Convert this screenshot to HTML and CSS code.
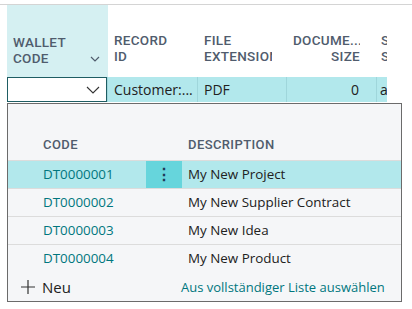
FILE: index.html
```html
<!DOCTYPE html>
<html lang="de">
<head>
  <meta charset="UTF-8" />
  <meta name="viewport" content="width=device-width, initial-scale=1.0" />
  <title>Wallet Code Lookup</title>
  <link rel="stylesheet" href="styles.css">
</head>
<body>
  <div class="grid">
    <div class="head">
      <div class="gutter"></div>
      <div class="hcell col-wallet active">
        <span class="htext">Wallet<br>Code</span>
        <svg class="chev" width="10" height="6" viewBox="0 0 10 6"><path d="M1 1l4 4 4-4" fill="none" stroke="#505c6d" stroke-width="1.2"/></svg>
      </div>
      <div class="hcell col-record"><span class="htext">Record<br>ID</span></div>
      <div class="hcell col-ext"><span class="htext">File<br>Extension</span></div>
      <div class="hcell col-size right"><span class="htext">Docume...<br>Size</span></div>
      <div class="hcell col-last"><span class="htext">Se<br>St</span></div>
    </div>
    <div class="row">
      <div class="gutter"></div>
      <div class="cell col-wallet">
        <div class="input">
          <svg class="chev" width="14" height="8" viewBox="0 0 14 8"><path d="M1 1l6 6 6-6" fill="none" stroke="#333" stroke-width="1.1"/></svg>
        </div>
      </div>
      <div class="cell col-record">Customer:...</div>
      <div class="cell col-ext">PDF</div>
      <div class="cell col-size right">0</div>
      <div class="cell col-last">a</div>
    </div>
  </div>

  <div class="lookup">
    <div class="lhead">
      <div class="lcode">Code</div>
      <div class="lbtn"></div>
      <div class="ldesc">Description</div>
    </div>
    <div class="lrow current">
      <div class="lcode">DT0000001</div>
      <div class="lbtn"><span class="dots">&#8942;</span></div>
      <div class="ldesc">My New Project</div>
    </div>
    <div class="lrow">
      <div class="lcode">DT0000002</div>
      <div class="lbtn"></div>
      <div class="ldesc">My New Supplier Contract</div>
    </div>
    <div class="lrow">
      <div class="lcode">DT0000003</div>
      <div class="lbtn"></div>
      <div class="ldesc">My New Idea</div>
    </div>
    <div class="lrow">
      <div class="lcode">DT0000004</div>
      <div class="lbtn"></div>
      <div class="ldesc">My New Product</div>
    </div>
    <div class="lfoot">
      <a class="new" href="#">
        <svg width="16" height="16" viewBox="0 0 16 16"><path d="M8 1v14M1 8h14" stroke="#333" stroke-width="1.2"/></svg>
        Neu
      </a>
      <a class="full" href="#">Aus vollständiger Liste auswählen</a>
    </div>
  </div>
</body>
</html>
```

FILE: styles.css
```css
body {
  margin: 0;
  font-family: "Open Sans", "Noto Sans", sans-serif;
  background: #fff;
  color: #212121;
  overflow: hidden;
}
.grid {
  margin-top: 4px;
  border-top: 1px solid #d4d4d4;
}
.head, .row {
  display: flex;
}
.gutter {
  width: 7px;
  flex: none;
}
.col-wallet { width: 101px; flex: none; }
.col-record { width: 90px; flex: none; }
.col-ext { width: 89px; flex: none; }
.col-size { width: 90px; flex: none; }
.col-last { width: 10px; flex: none; }

.hcell {
  height: 72px;
  box-sizing: border-box;
  padding: 0 6px 11px 6px;
  display: flex;
  align-items: flex-end;
  overflow: hidden;
  font-family: Roboto, sans-serif;
  font-size: 13.5px;
  font-weight: 500;
  letter-spacing: 0.3px;
  line-height: 16px;
  text-transform: uppercase;
  color: #505c6d;
  white-space: nowrap;
}
.htext {
  overflow: hidden;
}
.hcell.col-ext .htext {
  max-width: 68px;
}
.hcell.col-record, .hcell.col-ext, .hcell.col-size, .hcell.col-last {
  padding-bottom: 13px;
}
.hcell.right {
  justify-content: flex-end;
  text-align: right;
  padding-right: 17px;
}
.hcell.col-last {
  padding-left: 4px;
  padding-right: 0;
}
.hcell.active {
  background: #d5f0f2;
  justify-content: space-between;
  padding-right: 8px;
}
.hcell.active .chev {
  margin-bottom: 4px;
}

.row {
  height: 25px;
}
.cell {
  background: #b2e8ec;
  border-right: 1px solid #9fd6db;
  box-sizing: border-box;
  padding: 0 6px;
  font-size: 14px;
  line-height: 25px;
  white-space: nowrap;
  overflow: hidden;
}
.cell.right {
  text-align: right;
  padding-right: 17px;
}
.cell.col-last {
  border-right: none;
  padding-left: 3px;
}
.cell.col-wallet {
  padding: 0;
  background: #b2e8ec;
}
.input {
  height: 25px;
  box-sizing: border-box;
  border: 1px solid #1e5d63;
  background: #fff;
  display: flex;
  align-items: center;
  justify-content: flex-end;
  padding-right: 6px;
}

.lookup {
  margin: 1px 0 0 7px;
  width: 395px;
  box-sizing: border-box;
  border: 1px solid #6b6b6b;
  background: #f5f6f8;
}
.lhead, .lrow {
  display: flex;
}
.lcode {
  width: 138px;
  flex: none;
  box-sizing: border-box;
  padding-left: 35px;
}
.lbtn {
  width: 36px;
  flex: none;
}
.ldesc {
  flex: 1;
  padding-left: 6px;
}
.lhead {
  height: 56px;
  align-items: flex-end;
  padding-bottom: 8px;
  box-sizing: border-box;
  font-family: Roboto, sans-serif;
  font-size: 13px;
  font-weight: 500;
  letter-spacing: 0.4px;
  text-transform: uppercase;
  color: #505c6d;
}
.lrow {
  height: 28px;
  box-sizing: border-box;
  border-top: 1px solid #dcdcdc;
  font-size: 13.4px;
  line-height: 27px;
}
.lrow .lcode {
  color: #00767e;
}
.lrow.current {
  background: #b2e8ec;
}
.lrow.current .lbtn {
  background: #66d5dc;
  text-align: center;
}
.dots {
  color: #1f3b57;
  font-size: 16px;
  font-weight: 700;
}
.lfoot {
  height: 28px;
  display: flex;
  align-items: center;
  padding-top: 1px;
  font-size: 13px;
}
.lfoot a {
  text-decoration: none;
}
.new {
  display: flex;
  align-items: center;
  gap: 6px;
  color: #212121;
  width: 173px;
  box-sizing: border-box;
  padding-left: 12px;
  font-size: 15px;
}
.full {
  color: #00767e;
}
```
